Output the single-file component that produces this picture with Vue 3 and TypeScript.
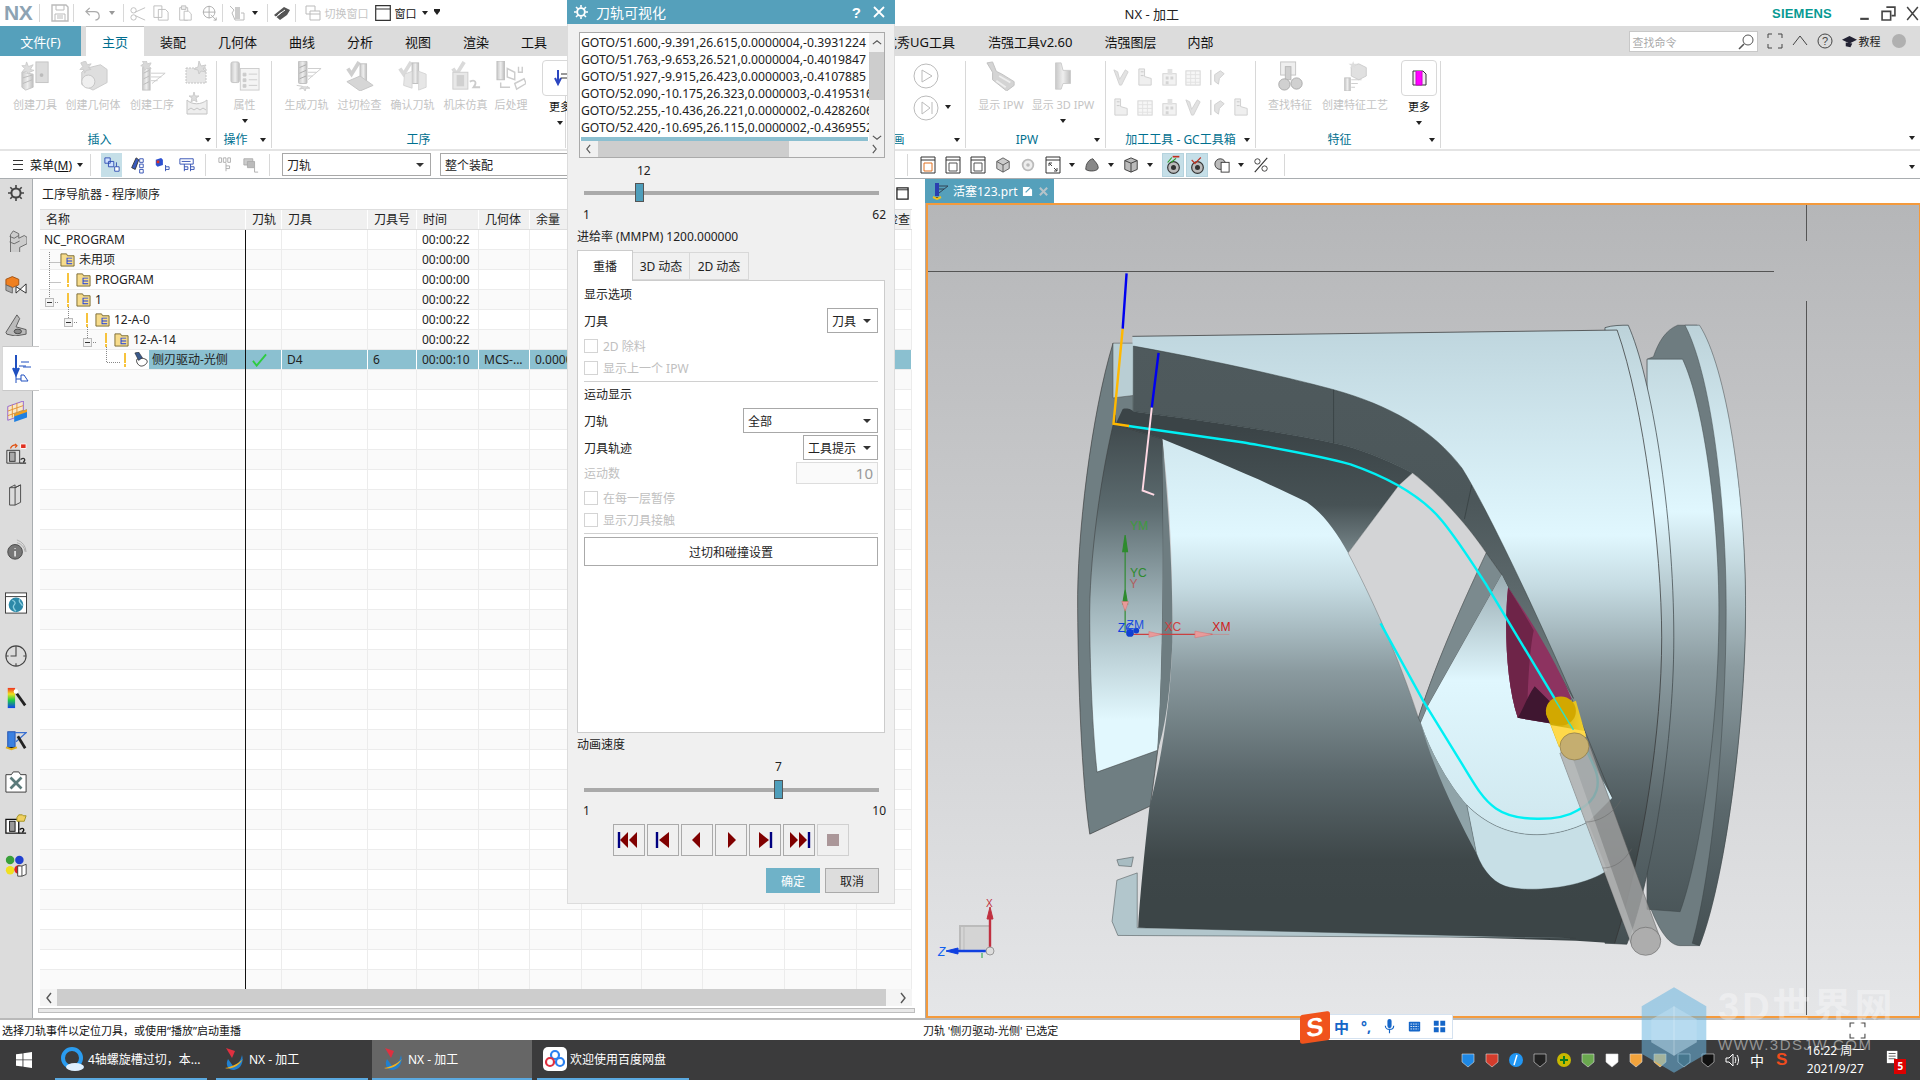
<script setup lang="ts">
interface RibbonItem { icon: string; label: string; w: number; arrow?: boolean }
interface RibbonGroup { label: string; w: number; pad: number; items: RibbonItem[]; small?: string[][]; corner?: boolean }

const tabs = ['装配', '几何体', '曲线', '分析', '视图', '渲染', '工具', '', '优秀UG工具', '浩强工具v2.60', '浩强图层', '内部']

const leftGroups: RibbonGroup[] = [
  { label: '插入', w: 217, pad: 6, corner: true, items: [
    { icon: 'i-tool', label: '创建刀具', w: 58 },
    { icon: 'i-geom', label: '创建几何体', w: 58 },
    { icon: 'i-op', label: '创建工序', w: 60 }
  ], small: [['i-dots'], ['i-wave']] },
  { label: '操作', w: 55, pad: 0, corner: true, items: [{ icon: 'i-prop', label: '属性', w: 55, arrow: true }] },
  { label: '工序', w: 294, pad: 8, items: [
    { icon: 'i-gen', label: '生成刀轨', w: 53 },
    { icon: 'i-check', label: '过切检查', w: 53 },
    { icon: 'i-verify', label: '确认刀轨', w: 53 },
    { icon: 'i-machine', label: '机床仿真', w: 53 },
    { icon: 'i-post', label: '后处理', w: 38 }
  ] }
]
const rightGroups: RibbonGroup[] = [
  { label: 'IPW', w: 140, pad: 2, corner: true, items: [
    { icon: 'i-ipw', label: '显示 IPW', w: 66 },
    { icon: 'i-ipw3', label: '显示 3D IPW', w: 58, arrow: true }
  ] },
  { label: '加工工具 - GC工具箱', w: 150, pad: 6, corner: true, items: [], small: [
    ['i-s1', 'i-s2', 'i-s3', 'i-s4', 'i-s5'],
    ['i-s2', 'i-s4', 'i-s3', 'i-s1', 'i-s5', 'i-s2']
  ] },
  { label: '特征', w: 185, pad: 4, corner: true, items: [
    { icon: 'i-find', label: '查找特征', w: 60 },
    { icon: 'i-feat', label: '创建特征工艺', w: 70 }
  ] }
]

const folder = 'folder'
interface NavRow { name: string; time: string; indent: number; bar?: boolean; icon?: string; check?: boolean; tool?: string; no?: string; geom?: string; stock?: string; sel?: boolean }
const rows: NavRow[] = [
  { name: 'NC_PROGRAM', time: '00:00:22', indent: 4 },
  { name: '未用项', time: '00:00:00', indent: 20, icon: folder },
  { name: 'PROGRAM', time: '00:00:00', indent: 27, bar: true, icon: folder },
  { name: '1', time: '00:00:22', indent: 27, bar: true, icon: folder },
  { name: '12-A-0', time: '00:00:22', indent: 46, bar: true, icon: folder },
  { name: '12-A-14', time: '00:00:22', indent: 65, bar: true, icon: folder },
  { name: '侧刃驱动-光侧', time: '00:00:10', indent: 84, bar: true, icon: 'op', check: true, tool: 'D4', no: '6', geom: 'MCS-...', stock: '0.0000', sel: true }
]
const blanks = Array.from({ length: 31 }, (_, i) => i)
const cols = ['刀轨', '刀具', '刀具号', '时间', '几何体', '余量', '', '', '', '', '检查']

const railIcons = ['r-part', 'r-asm', 'r-bracket', 'r-nav', 'r-grid', 'r-mach', 'r-books', 'r-info', 'r-web', 'r-clock', 'r-color', 'r-wand', 'r-kit', 'r-mach2', 'r-balls']

const list = [
  'GOTO/51.600,-9.391,26.615,0.0000004,-0.3931224',
  'GOTO/51.763,-9.653,26.521,0.0000004,-0.4019847',
  'GOTO/51.927,-9.915,26.423,0.0000003,-0.4107885',
  'GOTO/52.090,-10.175,26.323,0.0000003,-0.4195316',
  'GOTO/52.255,-10.436,26.221,0.0000002,-0.4282606',
  'GOTO/52.420,-10.695,26.115,0.0000002,-0.4369552'
]

const players = [
  { bar: 'M4 6v16', tri: 'M13 6 5 14l8 8zM22 6l-8 8 8 8z' },
  { bar: 'M8 6v16', tri: 'M20 6l-10 8 10 8z' },
  { bar: '', tri: 'M17 6 9 14l8 8z' },
  { bar: '', tri: 'M11 6l8 8-8 8z' },
  { bar: 'M20 6v16', tri: 'M8 6l10 8-10 8z' },
  { bar: 'M24 6v16', tri: 'M5 6l8 8-8 8zM14 6l8 8-8 8z' }
]

const tray = ['#1e88e5', '#d43c2c', '#2196f3', '#222', '#c7b800', '#6aa84f', '#fff', '#f2a33c', '#e8b04a', '#1b2b2a', '#111']
</script>

<template>
  <div class="app">
    <svg class="defs" width="0" height="0" aria-hidden="true">
      <defs>
        <linearGradient id="gm" x1="0" y1="0" x2="1" y2="0"><stop offset="0" stop-color="#c8c8c8" /><stop offset=".5" stop-color="#eee" /><stop offset="1" stop-color="#bdbdbd" /></linearGradient>
        <symbol id="i-tool" viewBox="0 0 32 32"><path d="M2 12l12 2v14l-8 3-4-3z" fill="url(#gm)" stroke="#c4c4c4" /><path d="M3 18l10-3M3 24l10-4" stroke="#bbb" /><rect x="17" y="1" width="13" height="22" fill="#dcdcdc" stroke="#c4c4c4" /><circle cx="23" cy="15" r="2" fill="#bbb" /><path d="M7 1l2 5 5-2-3 5 4 1-5 2-1 2-2-3-5 1 3-4-3-3 4 0z" fill="#ddd" stroke="#ccc" /></symbol>
        <symbol id="i-geom" viewBox="0 0 32 32"><path d="M8 8l16-4 7 5v14l-15 8-12-6V12z" fill="#dedede" stroke="#cacaca" /><circle cx="11" cy="22" r="7" fill="#efefef" stroke="#c4c4c4" /><path d="M8 0l2 4 4-1-3 4 3 2-5 1-2 3-1-4-4 0 3-3-2-4z" fill="#d8d8d8" stroke="#ccc" /></symbol>
        <symbol id="i-op" viewBox="0 0 32 32"><rect x="6" y="7" width="8" height="24" fill="url(#gm)" stroke="#c4c4c4" /><path d="M7 13l6-3M7 19l6-3M7 25l6-3" stroke="#bbb" /><path d="M15 13h15L16 24M15 17h11M15 21h7" fill="none" stroke="#ccc" /><path d="M10 0l1 3 4-1-2 4 2 2-5 0-2 2-1-4-3-1 3-2-1-3z" fill="#d8d8d8" stroke="#ccc" /></symbol>
        <symbol id="i-prop" viewBox="0 0 32 32"><rect x="1" y="1" width="9" height="22" rx="2" fill="url(#gm)" stroke="#c4c4c4" /><rect x="11" y="8" width="20" height="23" fill="#f4f4f4" stroke="#ccc" /><path d="M14 13h3v3h-3zM14 19h3v3h-3zM14 25h3v3h-3zM20 14h9M20 20h9M20 26h9" fill="#ccc" stroke="#ccc" /></symbol>
        <symbol id="i-gen" viewBox="0 0 32 32"><rect x="7" y="0" width="9" height="24" rx="1" fill="url(#gm)" stroke="#bfbfbf" /><path d="M8 7l7-3M8 13l7-3M8 19l7-3" stroke="#aaa" /><path d="M17 8h14L17 20M17 12h9M17 16h5" fill="none" stroke="#ccc" /><path d="M5 26l6 1-3 3 4-1 2 3 1-3 4 0-3-2" fill="#ddd" stroke="#ccc" /></symbol>
        <symbol id="i-check" viewBox="0 0 32 32"><path d="M3 8l4 6 8-13" fill="none" stroke="#cfcfcf" stroke-width="4" /><rect x="16" y="3" width="7" height="18" fill="url(#gm)" stroke="#bfbfbf" /><path d="M2 22l14-6 14 10-14 6z" fill="#d6d6d6" stroke="#c4c4c4" /></symbol>
        <symbol id="i-verify" viewBox="0 0 32 32"><path d="M2 8l4 6 8-13" fill="none" stroke="#dadada" stroke-width="4" /><rect x="15" y="2" width="7" height="22" fill="url(#gm)" stroke="#bfbfbf" /><path d="M7 14l8-3v18l-9-3zM22 11l8 3v14l-8 3z" fill="#e6e6e6" stroke="#d4d4d4" /></symbol>
        <symbol id="i-machine" viewBox="0 0 32 32"><path d="M2 8l4 6 8-13" fill="none" stroke="#dadada" stroke-width="4" /><rect x="2" y="12" width="16" height="18" fill="#e8e8e8" stroke="#ccc" /><rect x="6" y="15" width="8" height="12" fill="#d0d0d0" /><path d="M20 22c6-3 8 1 4 6h7" fill="none" stroke="#ccc" stroke-width="2" /></symbol>
        <symbol id="i-post" viewBox="0 0 32 32"><rect x="1" y="0" width="8" height="20" fill="url(#gm)" stroke="#bfbfbf" /><path d="M12 8l8 4v8l-8-3zM24 6v6h4V6M20 24l10-5 2 5-10 6zM5 23v5h10" fill="none" stroke="#ccc" stroke-width="1.5" /></symbol>
        <symbol id="i-dots" viewBox="0 0 24 24"><rect x="1" y="7" width="20" height="15" fill="#e6e6e6" stroke="#c4c4c4" stroke-dasharray="2 1" /><path d="M14 0l2 5 5-1-3 4 3 3-5-1-2 3-1-4-4-1 4-2z" fill="#ddd" stroke="#ccc" /></symbol>
        <symbol id="i-wave" viewBox="0 0 24 24"><path d="M2 8c5 5 14 5 20 0v14H2z" fill="#eee" stroke="#c4c4c4" /><path d="M3 18l3-2 3 2 3-2 3 2 3-2 3 2" fill="none" stroke="#c4c4c4" /><path d="M9 0l1 4 4 0-3 2 1 4-3-2-3 2 1-4-3-2 4 0z" fill="#ddd" stroke="#ccc" /></symbol>
        <symbol id="i-ipw" viewBox="0 0 32 32"><path d="M1 2l6-1 4 10 6 3 13 8v4l-8 6L7 20 7 12z" fill="#d4d4d4" stroke="#c0c0c0" /><path d="M14 16l12 7M11 21l10 7" stroke="#eee" stroke-width="2" /></symbol>
        <symbol id="i-ipw3" viewBox="0 0 32 32"><path d="M8 2h6l2 8h8v14h-8l-2 6H8z" fill="url(#gm)" stroke="#ccc" /></symbol>
        <symbol id="i-s1" viewBox="0 0 20 20"><path d="M2 2l4 2 2 8 6-10 3 2-7 14h-2L5 10z" fill="#e2e2e2" stroke="#d2d2d2" /></symbol>
        <symbol id="i-s2" viewBox="0 0 20 20"><path d="M3 1h6v8l7 2v7H3z" fill="#efefef" stroke="#d0d0d0" /><path d="M5 4h3M5 8h3" stroke="#c8c8c8" /></symbol>
        <symbol id="i-s3" viewBox="0 0 20 20"><rect x="3" y="6" width="14" height="12" fill="#f2f2f2" stroke="#d4d4d4" /><path d="M6 9h3v3H6zM11 9h3v3h-3zM6 14h3v3H6z" fill="#d4d4d4" /><rect x="8" y="1" width="5" height="6" fill="#e2e2e2" /></symbol>
        <symbol id="i-s4" viewBox="0 0 20 20"><rect x="2" y="3" width="15" height="15" fill="#f6f6f6" stroke="#d4d4d4" /><path d="M2 7h15M2 11h15M2 15h15M7 3v15M12 3v15" stroke="#e2e2e2" /></symbol>
        <symbol id="i-s5" viewBox="0 0 20 20"><path d="M3 2v16" stroke="#bbb" /><path d="M7 7l6-4 4 3-5 5-1 6-4-3z" fill="#e2e2e2" stroke="#d0d0d0" /></symbol>
        <symbol id="i-find" viewBox="0 0 32 32"><rect x="6" y="1" width="16" height="14" fill="#efefef" stroke="#c4c4c4" /><rect x="11" y="6" width="6" height="14" fill="#cfcfcf" stroke="#b8b8b8" /><circle cx="10" cy="25" r="6" fill="#d0d0d0" stroke="#aaa" /><circle cx="23" cy="24" r="6" fill="#d0d0d0" stroke="#aaa" /></symbol>
        <symbol id="i-feat" viewBox="0 0 32 32"><path d="M12 6l8-3 8 4v9l-8 4-8-4z" fill="#e0e0e0" stroke="#ccc" /><rect x="5" y="18" width="6" height="14" fill="url(#gm)" stroke="#c4c4c4" /><path d="M12 20h11M12 24h7M12 28h4" stroke="#ccc" /><path d="M14 0l1 3 4 0-3 2 1 3-3-2-3 2 1-3-3-2 4 0z" fill="#ddd" /></symbol>
        <symbol id="folder" viewBox="0 0 16 16"><path d="M1 2h6l1 2h7v11H1z" fill="#f7dc8c" stroke="#7a6a30" /><path d="M7 6h6v1H8v2h5v1H8v2h5v1H7z" fill="#1a3de0" /></symbol>
        <symbol id="op" viewBox="0 0 16 16"><path d="M4 8c3-2 8-2 11 1 1 3-3 6-6 6-3 0-6-4-5-7z" fill="#fff" stroke="#333" /><path d="M2 1l4-1 4 6-4 3z" fill="#3a5a8c" stroke="#222" stroke-width=".6" /></symbol>
      </defs>
    </svg>

    <header class="titlebar">
      <strong class="nx">NX</strong>
      <span class="sep"></span>
      <svg class="q q-save" viewBox="0 0 18 18"><path d="M1 1h14l2 2v14H1z" fill="none" stroke="#bbb" stroke-width="1.4" /><path d="M5 1v5h8V1M4 17v-7h10v7M6 12h6M6 14h6" fill="none" stroke="#bbb" /></svg>
      <span class="sep"></span>
      <svg class="q q-undo" viewBox="0 0 18 18"><path d="M5 3 1 7l4 4M1 7h9c6 0 7 8 1 9" fill="none" stroke="#aaa" stroke-width="1.3" /></svg>
      <i class="caret grey"></i>
      <span class="sep"></span>
      <svg class="q q-cut" viewBox="0 0 18 18"><circle cx="4" cy="6" r="3" fill="none" stroke="#bbb" /><circle cx="4" cy="14" r="3" fill="none" stroke="#bbb" /><path d="M6 8l11-5M6 12l11 5" stroke="#bbb" /></svg>
      <svg class="q q-copy" viewBox="0 0 18 18"><path d="M1 1h9v13H1zM6 5h8l3 3v9H6z" fill="#fff" stroke="#bbb" /></svg>
      <svg class="q q-paste" viewBox="0 0 18 18"><path d="M3 3h9v14H3z" fill="none" stroke="#bbb" /><path d="M5 1h5v4H5z" fill="#eee" stroke="#bbb" /><path d="M8 7h5l3 3v7H8z" fill="#fff" stroke="#bbb" /></svg>
      <svg class="q q-move" viewBox="0 0 18 18"><circle cx="8" cy="8" r="6.5" fill="none" stroke="#aaa" /><path d="M1 8h14M8 1v14M10 11l6 6M13 17h3v-3" fill="none" stroke="#aaa" /></svg>
      <span class="sep"></span>
      <svg class="q q-tl" viewBox="0 0 18 18"><rect x="7" y="3" width="5" height="12" fill="#ccc" /><path d="M2 2l4 4-2 3 3 7h9V9l-3 0" fill="none" stroke="#bbb" /></svg>
      <i class="caret"></i>
      <span class="sep"></span>
      <svg class="q q-tl2" viewBox="0 0 18 18"><path d="M1 11l10-8 6 3-3 5-7 5z" fill="#555" /><path d="M5 11l7-5M3 13l6-5" stroke="#fff" /></svg>
      <span class="sep"></span>
      <svg class="q q-win1" viewBox="0 0 16 16"><path d="M1 1h9v8H1z" fill="none" stroke="#bbb" /><path d="M5 6h10v9H5z" fill="#fff" stroke="#bbb" /><path d="M5 9h10" stroke="#bbb" /></svg>
      <span class="q-label grey-text">切换窗口</span>
      <svg class="q q-win2" viewBox="0 0 16 16"><path d="M.7.7h14.6v14.6H.7zM.7 4h14.6" fill="none" stroke="#333" stroke-width="1.2" /></svg>
      <span class="q-label win-label">窗口</span>
      <i class="caret"></i>
      <i class="caret barred"></i>
      <span class="app-title">NX - 加工</span>
      <span class="siemens">SIEMENS</span>
      <div class="win-btns">
        <svg viewBox="0 0 14 14"><path d="M3 12h8" stroke="#444" stroke-width="2" /></svg>
        <svg viewBox="0 0 14 14"><path d="M5 1h8v8h-3M1 5h8v8H1z" fill="none" stroke="#444" stroke-width="1.5" /></svg>
        <svg viewBox="0 0 14 14"><path d="M2 1l10 12M12 1 2 13" stroke="#444" stroke-width="1.4" /></svg>
      </div>
    </header>

    <nav class="tabs">
      <span class="tab-file">文件(F)</span>
      <span class="tab-on">主页</span>
      <span v-for="(t, i) in tabs" :key="i" :class="['tab', 'tab-' + i]">{{ t }}</span>
      <div class="search"><span>查找命令</span><svg viewBox="0 0 16 16"><circle cx="10" cy="6" r="5" fill="none" stroke="#555" /><path d="M6 10l-5 5" stroke="#555" stroke-width="1.6" /></svg></div>
      <svg class="t-ic" viewBox="0 0 16 16"><path d="M1 5V1h4M11 1h4v4M15 11v4h-4M5 15H1v-4" fill="none" stroke="#444" /></svg>
      <svg class="t-ic" viewBox="0 0 16 16"><path d="M1 12 8 3l7 9" fill="none" stroke="#444" /></svg>
      <svg class="t-ic" viewBox="0 0 16 16"><circle cx="8" cy="8" r="7" fill="none" stroke="#444" /><text x="8" y="12" text-anchor="middle" font-size="11" fill="#444" font-family="Liberation Sans">?</text></svg>
      <svg class="t-cap" viewBox="0 0 16 16"><path d="M0 6l8-4 8 4-8 4z" fill="#223" /><path d="M4 9v4l5 1 2-4" fill="#223" /></svg>
      <span class="tut">教程</span>
      <span class="avatar"></span>
    </nav>

    <section class="ribbon">
      <div v-for="g in leftGroups" :key="g.label" class="group" :style="{ width: g.w + 'px' }">
        <div class="g-body" :style="{ paddingLeft: g.pad + 'px' }">
          <div v-for="it in g.items" :key="it.label" class="r-item" :style="{ width: it.w + 'px' }">
            <svg class="r-icon"><use :href="'#' + it.icon" /></svg>
            <span class="r-label">{{ it.label }}</span>
            <i v-if="it.arrow" class="caret r-caret"></i>
          </div>
          <div v-if="g.small" class="r-smalls">
            <svg v-for="s in g.small" :key="s[0]" class="r-small"><use :href="'#' + s[0]" /></svg>
          </div>
          <div v-if="g.label === '工序'" class="more-wrap">
            <div class="more-box"><svg viewBox="0 0 20 20"><path d="M8 2v12M5 10l3 6 3-6" stroke="#2b46c0" stroke-width="2" fill="none" /><path d="M11 6h9M11 10h7" stroke="#333" /></svg></div>
            <span class="r-label dark">更多</span><i class="caret r-caret"></i>
          </div>
        </div>
        <div :class="['g-foot', { shift: g.corner }]"><span>{{ g.label }}</span><i v-if="g.corner" class="caret corner"></i></div>
      </div>
      <div class="group filler"></div>
      <div class="group anim">
        <div class="anim-grid">
          <svg class="circ" viewBox="0 0 26 26"><circle cx="13" cy="13" r="12" fill="none" stroke="#bbb" /><path d="M9 7l10 6-10 6z" fill="none" stroke="#bbb" /></svg>
          <svg class="circ" viewBox="0 0 26 26"><circle cx="13" cy="13" r="12" fill="none" stroke="#bbb" /><path d="M9 7l8 6-8 6zM19 7v12" fill="none" stroke="#bbb" /></svg>
          <i class="caret"></i>
        </div>
        <div class="g-foot"><span>动画</span><i class="caret corner"></i></div>
      </div>
      <div v-for="g in rightGroups" :key="g.label" class="group" :style="{ width: g.w + 'px' }">
        <div class="g-body" :style="{ paddingLeft: g.pad + 'px' }">
          <div v-for="it in g.items" :key="it.label" class="r-item" :style="{ width: it.w + 'px' }">
            <svg class="r-icon"><use :href="'#' + it.icon" /></svg>
            <span class="r-label">{{ it.label }}</span>
            <i v-if="it.arrow" class="caret r-caret"></i>
          </div>
          <div v-if="g.small" class="gc-grid">
            <div v-for="(r, ri) in g.small" :key="ri" class="gc-row">
              <svg v-for="(s, si) in r" :key="si" class="gc-ic"><use :href="'#' + s" /></svg>
            </div>
          </div>
          <div v-if="g.label === '特征'" class="more-wrap feat-more">
            <div class="more-box"><svg viewBox="0 0 20 20"><path d="M4 3h10l3 3v11H4z" fill="#eee" stroke="#333" /><path d="M7 3v14h6V3" fill="#f0f" stroke="#c0c" /></svg></div>
            <span class="r-label dark">更多</span><i class="caret r-caret"></i>
          </div>
        </div>
        <div :class="['g-foot', { shift: g.corner && !g.small }]"><span>{{ g.label }}</span><i v-if="g.corner" class="caret corner"></i></div>
      </div>
      <i class="caret ribbon-end"></i>
    </section>

    <section class="toolbar">
      <span class="burger"></span>
      <span class="menu-t">菜单(<u>M</u>)</span>
      <i class="caret"></i>
      <span class="tsep"></span>
      <span class="tb on"><svg viewBox="0 0 18 18"><path d="M1 1h6v6H1zM5 5h6v6H5z" fill="#cfe0ff" stroke="#2a48b0" /><path d="M12 11h5v5h-5zM14 6v5" fill="#fff" stroke="#2a48b0" /></svg></span>
      <span class="tb"><svg viewBox="0 0 18 18"><path d="M3 12l5-11 3 2-4 11z" fill="#3a5cc0" stroke="#333" /><path d="M12 2h4v4h-4zM12 8h4v4h-4zM12 14h4v4h-4z" fill="#fff" stroke="#2a48b0" /></svg></span>
      <span class="tb"><svg viewBox="0 0 18 18"><path d="M2 3l6-2 2 2v6l-6 2-2-2z" fill="#2c50d0" /><path d="M3 4h3v3H3z" fill="#e03020" /><path d="M13 9v7M13 11h4v3h-4" fill="none" stroke="#2a48b0" /></svg></span>
      <span class="tb"><svg viewBox="0 0 18 18"><path d="M1 2h15M1 2v6h15V2M3 5h10" fill="none" stroke="#2a48b0" /><path d="M6 8v8M6 11h4v3H6M13 8v8M13 11h4v3h-4" fill="none" stroke="#2a48b0" /></svg></span>
      <span class="tsep gap"></span>
      <span class="tb dim"><svg viewBox="0 0 18 18"><path d="M1 1h3v5H1zM6 1h3v5H6zM11 1h3v5h-3zM9 7v9M9 10h4v3H9" fill="none" stroke="#aaa" /></svg></span>
      <span class="tb dim"><svg viewBox="0 0 18 18"><path d="M1 2h10v7H1z" fill="#ccc" stroke="#aaa" /><path d="M5 5h8v7H5z" fill="#bbb" stroke="#aaa" /><path d="M13 12v5h4" fill="none" stroke="#aaa" /></svg></span>
      <span class="tsep last"></span>
      <div class="select tb-sel1"><span>刀轨</span><i class="caret"></i></div>
      <div class="select tb-sel2"><span>整个装配</span></div>
      <span class="tsep view-sep"></span>
      <span class="v-ic" v-for="n in 3" :key="n"><svg viewBox="0 0 16 18"><path d="M1 1h14v16H1zM1 4h14" fill="#fff" stroke="#333" /><path d="M4 7h8v8H4z" fill="none" :stroke="n === 1 ? '#e07020' : '#555'" /></svg></span>
      <span class="v-ic"><svg viewBox="0 0 18 18"><path d="M2 5l7-4 7 4v8l-7 4-7-4z" fill="#ccc" stroke="#555" /><path d="M2 5l7 4 7-4M9 9v8" fill="none" stroke="#555" /></svg></span>
      <span class="v-ic"><svg viewBox="0 0 18 18"><circle cx="9" cy="9" r="6" fill="#eee" stroke="#bbb" stroke-width="2" /><circle cx="9" cy="9" r="2" fill="#bbb" /></svg></span>
      <span class="v-ic"><svg viewBox="0 0 16 18"><path d="M1 1h14v16H1zM1 4h14" fill="#fff" stroke="#333" /><path d="M4 7l3 3M4 7v3M4 7h3M12 15l-3-3M12 15v-3M12 15H9" fill="none" stroke="#444" /></svg></span>
      <i class="caret"></i>
      <span class="v-ic gap7"><svg viewBox="0 0 18 18"><path d="M2 14c0-6 3-11 8-12 2 3 6 6 6 10 0 4-10 5-14 2z" fill="#888" stroke="#444" /></svg></span>
      <i class="caret"></i>
      <span class="v-ic gap7"><svg viewBox="0 0 18 18"><path d="M2 4l7-3 7 3v10l-7 3-7-3z" fill="#bbb" stroke="#333" /><path d="M2 4l7 3 7-3M9 7v10" fill="none" stroke="#333" /></svg></span>
      <i class="caret"></i>
      <span class="v-on first"><svg viewBox="0 0 18 22"><circle cx="9" cy="14" r="7" fill="#bbb" stroke="#333" stroke-width="1.4" /><circle cx="9" cy="14" r="3" fill="#333" /><path d="M2 8l5-6M6 8l6-5" stroke="#2ca02c" stroke-width="1.4" /><path d="M8 1h8" stroke="#c03020" stroke-width="2" /></svg></span>
      <span class="v-on"><svg viewBox="0 0 18 22"><circle cx="9" cy="14" r="7" fill="#bbb" stroke="#333" stroke-width="1.4" /><circle cx="9" cy="14" r="3" fill="#333" /><path d="M2 5l4 4 7-7" fill="none" stroke="#c03020" stroke-width="1.4" /></svg></span>
      <span class="v-ic gap3"><svg viewBox="0 0 18 18"><circle cx="7" cy="8" r="6" fill="#bbb" stroke="#333" /><rect x="8" y="6" width="9" height="11" fill="#fff" stroke="#333" /></svg></span>
      <i class="caret"></i>
      <span class="v-ic gap7"><svg viewBox="0 0 18 18"><path d="M2 17 16 1" stroke="#333" stroke-width="1.3" /><circle cx="5" cy="5" r="3" fill="none" stroke="#333" /><circle cx="13" cy="13" r="3" fill="none" stroke="#333" /></svg></span>
      <span class="tsep view-end"></span>
      <i class="caret toolbar-end"></i>
    </section>

    <main class="work">
      <aside class="rail">
        <div class="rail-gear"><svg viewBox="0 0 16 16"><circle cx="8" cy="8" r="4.6" fill="none" stroke="#444" stroke-width="2" /><path d="M8 0v3M8 13v3M0 8h3M13 8h3M2.3 2.3l2 2M11.7 11.7l2 2M2.3 13.7l2-2M11.7 4.3l2-2" stroke="#444" stroke-width="1.6" /></svg></div>
        <div v-for="r in railIcons" :key="r" :class="['rail-it', r]">
          <svg v-if="r === 'r-part'" viewBox="0 0 24 24"><path d="M9 1l6 3v5l6-3 3 2v7l-8 4v6l-6 2-4-3V5z" fill="#ccc" stroke="#666" /><path d="M5 13l5 2 6-3M5 7l5 2 5-3" fill="none" stroke="#666" /></svg>
          <svg v-else-if="r === 'r-asm'" viewBox="0 0 24 24"><path d="M1 8l7-3 7 3v6l-7 3-7-3z" fill="#f08020" stroke="#a05010" /><path d="M1 14l7 3v6l-7-3z" fill="#aaa" stroke="#666" /><path d="M12 16l11 7V13L12 23z" fill="#fff" stroke="#222" /></svg>
          <svg v-else-if="r === 'r-bracket'" viewBox="0 0 24 24"><path d="M1 20 13 1l3 4-4 9 11 3v5l-12 2-9-2z" fill="#bbb" stroke="#555" /><ellipse cx="14" cy="19" rx="4" ry="2.5" fill="#888" stroke="#444" /></svg>
          <svg v-else-if="r === 'r-nav'" viewBox="0 0 24 30"><path d="M7 1v20M4 14l3 7 3-7" fill="#3370e0" stroke="#2050c0" stroke-width="2" /><path d="M12 8h8M10 12h7M22 13H14" stroke="#2050c0" /><path d="M7 21v8M7 25h5M12 21v6h7l-4-6z" fill="none" stroke="#2050c0" /></svg>
          <svg v-else-if="r === 'r-grid'" viewBox="0 0 24 24"><path d="M3 6 20 0v15L3 21z" fill="#f8e8c8" stroke="#9060d0" /><path d="M3 11l17-6M3 16l17-6M8 4v14M13 2v14" stroke="#e09030" /><path d="M10 14l14-5v9l-14 5z" fill="#2080e0" /><path d="M10 14l14-5v3l-14 5z" fill="#f0a020" /></svg>
          <svg v-else-if="r === 'r-mach'" viewBox="0 0 24 24"><path d="M2 8h14v14H2z" fill="#ddd" stroke="#333" /><rect x="5" y="10" width="6" height="10" fill="#aaa" stroke="#333" /><path d="M16 22h7M17 18c4-3 6 0 3 3" fill="none" stroke="#333" stroke-width="1.4" /><path d="M6 6c1-3 3-4 6-4l-1-1 2 2-2 2" fill="none" stroke="#e05010" stroke-width="1.4" /><path d="M17 1h6v5h-6z" fill="#e03020" stroke="#fff" /></svg>
          <svg v-else-if="r === 'r-books'" viewBox="0 0 24 24"><path d="M5 4v19h6V4zM11 4l6-3v19l-6 3M17 1l-6 3M5 4l6-3" fill="none" stroke="#444" /><path d="M11 1v3" stroke="#444" /></svg>
          <svg v-else-if="r === 'r-info'" viewBox="0 0 24 24"><circle cx="11" cy="14" r="8" fill="#777" stroke="#444" /><path d="M11 10v1M11 13v6" stroke="#ddd" stroke-width="2" /><path d="M13 4a12 12 0 0 1 9 10M13 1a15 15 0 0 1 10 13" fill="none" stroke="#aaa" /></svg>
          <svg v-else-if="r === 'r-web'" viewBox="0 0 24 24"><rect x=".5" y="1" width="23" height="22" fill="#fff" stroke="#333" /><path d="M1 5h22" stroke="#333" /><circle cx="12" cy="14" r="8" fill="#2c89a8" /><path d="M8 9c3 1 4 3 2 5s0 5 2 7M16 8c-2 3 2 4 3 7" fill="none" stroke="#8ecfe0" stroke-width="1.4" /></svg>
          <svg v-else-if="r === 'r-clock'" viewBox="0 0 24 24"><circle cx="12" cy="12" r="11" fill="none" stroke="#444" stroke-width="1.2" /><path d="M12 1v3M12 20v3M1 12h3M20 12h3M12 4v8H6" fill="none" stroke="#444" stroke-width="1.2" /></svg>
          <svg v-else-if="r === 'r-color'" viewBox="0 0 24 24"><defs><linearGradient id="rb" x1="0" y1="0" x2="0" y2="1"><stop offset="0" stop-color="#f03020" /><stop offset=".3" stop-color="#f0e020" /><stop offset=".6" stop-color="#20d040" /><stop offset="1" stop-color="#1040f0" /></linearGradient></defs><rect x="3" y="1" width="8" height="22" fill="url(#rb)" /><path d="M12 6l10 14" stroke="#222" stroke-width="3" /><circle cx="12" cy="5" r="2.5" fill="#fff" /></svg>
          <svg v-else-if="r === 'r-wand'" viewBox="0 0 24 24"><rect x="3" y="3" width="8" height="17" fill="#3a80e0" stroke="#2050b0" /><path d="M11 4h12L12 14" fill="none" stroke="#3a70d0" stroke-width="1.4" /><path d="M14 8l8 13" stroke="#222" stroke-width="3" /><path d="M1 20l6 2 6-2" stroke="#e0b020" stroke-width="2" /></svg>
          <svg v-else-if="r === 'r-kit'" viewBox="0 0 24 24"><path d="M1 4h6l2-3h6l2 3h6v19H1z" fill="#fff" stroke="#333" /><path d="M6 7l12 12M18 7 6 19" stroke="#5a7a7a" stroke-width="3" /></svg>
          <svg v-else-if="r === 'r-mach2'" viewBox="0 0 24 24"><path d="M1 7h14v15H1z" fill="#fff" stroke="#111" stroke-width="1.4" /><rect x="5" y="9" width="6" height="11" fill="#999" stroke="#111" /><path d="M15 22h8M16 18c4-3 6 0 3 3" fill="none" stroke="#111" stroke-width="1.4" /><path d="M13 5l2-3h4l1 1h3l-2 6h-8z" fill="#f0d060" stroke="#a09020" /></svg>
          <svg v-else viewBox="0 0 26 26"><circle cx="6" cy="6" r="5" fill="#3aa03a" /><circle cx="17" cy="6" r="5" fill="#2040d0" /><circle cx="6" cy="18" r="5" fill="#f0e020" /><circle cx="16" cy="17" r="5" fill="#e02020" /><path d="M15 13v12h5V13zM20 13l5-2v12l-5 2" fill="#fff" stroke="#333" /></svg>
        </div>
      </aside>

      <section class="navpanel">
        <div class="nav-head">工序导航器 - 程序顺序<svg class="maxi" viewBox="0 0 14 14"><path d="M1 1h12v12H1z" fill="none" stroke="#222" stroke-width="1.4" /><path d="M1 3h12" stroke="#222" /></svg></div>
        <div class="table">
          <div class="thead">
            <span class="th c-name">名称</span>
            <span v-for="(c, i) in cols" :key="i" :class="['th', { 'th-end': c === '检查' }]">{{ c }}</span>
          </div>
          <div v-for="(r, i) in rows" :key="r.name" :class="['tr', { alt: i % 2 === 1, sel: r.sel }]">
            <div class="td c-name" :style="{ paddingLeft: r.indent + 'px' }">
              <i v-if="r.bar" class="warn"></i>
              <svg v-if="r.icon" class="n-ic"><use :href="'#' + r.icon" /></svg>
              <span class="n-text">{{ r.name }}</span>
            </div>
            <div class="td"><svg v-if="r.check" class="tick" viewBox="0 0 16 14"><path d="M1 8l4 5L15 1" fill="none" stroke="#2ecc40" stroke-width="2" /></svg></div>
            <div class="td">{{ r.tool }}</div>
            <div class="td">{{ r.no }}</div>
            <div class="td">{{ r.time }}</div>
            <div class="td">{{ r.geom }}</div>
            <div class="td">{{ r.stock }}</div>
            <div class="td"></div><div class="td"></div><div class="td"></div><div class="td"></div><div class="td"></div>
          </div>
          <div v-for="b in blanks" :key="b" :class="['tr', { alt: b % 2 === 0 }]">
            <div class="td c-name"></div>
            <div v-for="n in 11" :key="n" class="td"></div>
          </div>
          <svg class="tree" width="120" height="160" viewBox="0 0 120 160">
            <path d="M9.5 42v47M9.5 52.5h11M9.5 72.5h11M13 92.5h5M28.5 97v11M32 112.5h6M47.5 117v11M51 132.5h6M66.5 137v15.5h14" fill="none" stroke="#888" stroke-dasharray="1 1" />
            <g v-for="m in [[5,88],[24,108],[43,128]]" :key="m[0]"><rect :x="m[0] + .5" :y="m[1] + .5" width="8" height="8" fill="#f4f4f4" stroke="#bbb" /><path :d="`M${m[0] + 2} ${m[1] + 4.5}h5`" stroke="#333" /></g>
          </svg>
        </div>
        <div class="hscroll">
          <svg viewBox="0 0 8 12"><path d="M6 1 2 6l4 5" fill="none" stroke="#555" stroke-width="1.4" /></svg>
          <span class="hthumb"></span>
          <svg viewBox="0 0 8 12"><path d="M2 1l4 5-4 5" fill="none" stroke="#555" stroke-width="1.4" /></svg>
        </div>
        <div class="split"></div>
      </section>

      <section class="viewport-col">
        <div class="doc-bar">
          <div class="doc-tab">
            <svg class="doc-ic" viewBox="0 0 18 18"><rect x="4" y="1" width="4" height="13" fill="#2a3fb0" /><path d="M8 4h9L8 11M8 7h5" fill="none" stroke="#345" /><path d="M2 15l4 2 4-2" stroke="#f0c020" stroke-width="2" /></svg>
            <span>活塞123.prt</span>
            <svg class="doc-mini" viewBox="0 0 12 12"><path d="M1 1h7l3 3v7H1z" fill="#fff" /><path d="M4 7l5-5" stroke="#55a0bb" stroke-width="1.4" /></svg>
            <svg class="doc-mini x" viewBox="0 0 12 12"><path d="M2 2l8 8M10 2l-8 8" stroke="#b5c3c9" stroke-width="2.2" /></svg>
          </div>
        </div>
        <div class="viewport">
          <svg class="scene" viewBox="925 202 995 816" width="995" height="816">
            <defs>
              <linearGradient id="body" gradientUnits="userSpaceOnUse" x1="0" y1="225" x2="0" y2="1400">
                <stop offset="0" stop-color="#bfd6de" /><stop offset=".36" stop-color="#e0f7fe" /><stop offset=".45" stop-color="#c5dbe2" /><stop offset=".6" stop-color="#8a9a9f" /><stop offset=".78" stop-color="#5b686c" /><stop offset=".93" stop-color="#3e4749" /><stop offset="1" stop-color="#3c4547" />
              </linearGradient>
              <linearGradient id="rim" gradientUnits="userSpaceOnUse" x1="0" y1="215" x2="0" y2="1495">
                <stop offset="0" stop-color="#bcd2d9" /><stop offset=".3" stop-color="#e0f7fe" /><stop offset=".55" stop-color="#8c9ca1" /><stop offset=".78" stop-color="#5b686c" /><stop offset="1" stop-color="#455053" />
              </linearGradient>
              <linearGradient id="inner" gradientUnits="userSpaceOnUse" x1="0" y1="400" x2="0" y2="1030">
                <stop offset="0" stop-color="#3d4649" /><stop offset=".3" stop-color="#5b6a6e" /><stop offset=".62" stop-color="#9fb3b9" /><stop offset="1" stop-color="#e2f8fe" />
              </linearGradient>
              <linearGradient id="wall" gradientUnits="userSpaceOnUse" x1="0" y1="260" x2="0" y2="900">
                <stop offset="0" stop-color="#4f5a5d" /><stop offset=".5" stop-color="#4c575a" /><stop offset="1" stop-color="#687578" />
              </linearGradient>
              <linearGradient id="floor" gradientUnits="userSpaceOnUse" x1="0" y1="430" x2="0" y2="690">
                <stop offset="0" stop-color="#3b4447" /><stop offset=".6" stop-color="#475255" /><stop offset="1" stop-color="#7a898d" />
              </linearGradient>
              <linearGradient id="pocket" gradientUnits="userSpaceOnUse" x1="0" y1="740" x2="0" y2="1260">
                <stop offset="0" stop-color="#9db0b6" /><stop offset=".4" stop-color="#e0f7fe" /><stop offset="1" stop-color="#cfe7ee" />
              </linearGradient>
              <linearGradient id="gold" x1="0" y1="0" x2="1" y2="0"><stop offset="0" stop-color="#c9a400" /><stop offset="1" stop-color="#f0d030" /></linearGradient>
            </defs>
            <g transform="translate(1050 220) scale(.4847)">
              <path d="M1295 215C1270 225 1255 250 1245 280L1232 285V1420L1240 1420C1260 1470 1280 1495 1300 1495L1340 1495C1390 1370 1435 1050 1435 795C1435 560 1390 300 1335 215Z" fill="#6e7c80" stroke="#3c4547" stroke-width="1" />
              <path d="M1310 215L1340 215C1395 300 1435 560 1435 795C1435 1050 1390 1370 1340 1495L1325 1490C1365 1350 1395 1050 1395 800C1395 580 1365 320 1310 215Z" fill="url(#rim)" stroke="#3c4547" stroke-width="1" />
              <path d="M1232 285L1305 285C1350 380 1380 620 1380 805C1380 1030 1345 1300 1300 1425L1232 1420Z" fill="url(#rim)" stroke="#3c4547" stroke-width="1" />
              <path d="M1145 220C1160 215 1180 215 1193 215C1240 320 1287 600 1287 860C1287 1100 1235 1380 1190 1492L1145 1490Z" fill="url(#rim)" stroke="#3c4547" stroke-width="1.5" />
              <path d="M130 252C85 400 55 650 57 800C58 950 65 1150 82 1265L207 1207L252 870L232 450L172 393V360Z" fill="#6f7e82" stroke="#333" stroke-width="1.2" />
              <path d="M135 400C105 520 80 700 82 830C83 960 90 1070 97 1137L222 1092C232 950 236 700 232 500V450L135 420Z" fill="url(#inner)" stroke="#333" stroke-width="1" />
              <path d="M130 252H172V360L130 365Z" fill="#b9ced4" stroke="#444" stroke-width="1" />
              <path d="M170 238L1170 225C1225 380 1262 680 1262 860C1262 1050 1225 1300 1165 1490L1085 1485L182 1458C185 1400 195 1300 205 1210C225 1130 250 1000 252 870C255 700 245 560 232 450L172 393Z" fill="url(#body)" />
              <path d="M232 450C245 600 255 750 252 870C250 950 240 1040 222 1092C232 950 236 700 232 500Z" fill="#6e7d81" />
              <path d="M170 238L1170 225C1225 380 1262 680 1262 860C1262 1050 1225 1300 1165 1490" fill="none" stroke="#333" stroke-width="1.5" />
              <path d="M172 258C350 290 500 325 585 348C700 380 790 430 850 510C900 590 1000 800 1080 985L945 755L932 730L900 685C860 625 800 560 748 520C690 490 640 470 585 458C450 430 300 410 172 393Z" fill="url(#wall)" stroke="#2f3739" stroke-width="1" />
              <path d="M585 348V458M870 545L855 615" stroke="#2f3739" stroke-width="1.2" fill="none" />
              <path d="M150 388C160 385 170 390 172 393C300 410 450 430 585 458C640 470 690 490 748 520L720 545L615 685C590 640 565 605 530 580C450 540 330 490 232 450L135 420Z" fill="url(#floor)" />
              <path d="M615 685L720 545L748 520C800 560 860 625 900 685C860 770 800 900 760 1025C720 900 660 770 615 685Z" fill="#d3d4d6" stroke="#555" stroke-width=".8" />
              <path d="M900 685L932 730L780 1000L765 1035L760 1025C800 900 860 770 900 685Z" fill="#7b8a8e" stroke="#333" stroke-width=".8" />
              <path d="M932 730L945 756C937 830 940 950 965 1025L1040 1038L1075 1060L1110 1100L1160 1190L1110 1240C1040 1275 940 1285 860 1205C830 1170 790 1110 765 1035L780 1000Z" fill="url(#pocket)" />
              <path d="M765 1035C790 1110 830 1170 860 1205L880 1305C840 1230 790 1130 765 1035Z" fill="#8fa3a8" />
              <path d="M860 1205C940 1285 1040 1275 1110 1240L1150 1340C1100 1375 1000 1385 950 1375C920 1370 895 1345 880 1305Z" fill="#c7dfe6" stroke="#3a4345" stroke-width=".8" />
              <path d="M945 756C937 830 940 950 965 1025L1040 1038L1076 985C1040 900 990 820 945 756Z" fill="#8d3360" />
              <path d="M945 756C937 830 940 950 965 1025L985 1020C985 960 990 880 998 845C985 820 960 780 945 756Z" fill="#6e2448" />
              <path d="M965 1025C975 1010 985 980 1000 960L1050 1010L1040 1038Z" fill="#3f1630" />
              <path d="M1076 985L1160 1190" stroke="#333" stroke-width="1" />
              <path d="M128 1445L138 1360L180 1345V1458L1085 1480L940 1478L140 1474Z" fill="#b2c6cc" stroke="#3a4345" stroke-width="1" />
              <path d="M138 1318L172 1312L168 1332L142 1330Z" fill="#a8bcc2" stroke="#3a4345" stroke-width="1" />
              <path d="M162 423L400 457C500 475 560 485 620 502C700 530 770 570 810 620C850 670 880 720 900 750L1080 1050" fill="none" stroke="#00f0f4" stroke-width="5" stroke-linejoin="round" />
              <path d="M682 830L770 990L850 1120C880 1170 895 1195 920 1212C960 1240 1050 1240 1090 1215C1130 1195 1140 1160 1120 1120L1090 1055" fill="none" stroke="#00f0f4" stroke-width="5" />
              <path d="M150 222 131 418l32 5" fill="none" stroke="#ffb800" stroke-width="5" />
              <path d="M158 108l-8 114M224 272l-14 113" fill="none" stroke="#0000f0" stroke-width="5" />
              <path d="M210 385 191 556l24 9" fill="none" stroke="#ffd9e4" stroke-width="4" />
              <path d="M1052 1098L1112 1078L1260 1483L1200 1493Z" fill="#9c9d9d" fill-opacity=".85" stroke="#555" stroke-width="1" />
              <path d="M1052 1098L1072 1090L1212 1490L1200 1493Z" fill="#c6c7c7" fill-opacity=".5" />
              <path d="M1105 1240C1130 1240 1160 1225 1178 1195M1140 1335C1165 1335 1185 1320 1200 1295" fill="none" stroke="#666" />
              <ellipse cx="1229" cy="1486" rx="31" ry="29" fill="#adadad" stroke="#555" />
              <path d="M1023 1015L1085 990L1105 1060L1050 1085Z" fill="url(#gold)" />
              <ellipse cx="1054" cy="1011" rx="31" ry="30" fill="#d2a800" />
              <path d="M1033 1040L1103 1052L1106 1064L1051 1086Z" fill="#ffd94a" />
              <ellipse cx="1082" cy="1084" rx="30" ry="28" fill="#c5ae70" stroke="#6f6030" />
              <path d="M1040 985L1080 1050" stroke="#33e0c0" stroke-width="3" fill="none" />
              <path d="M155 850V648M155 648l-5 34h10zM155 760l-5 30h10z" fill="#2e8b2e" stroke="#2e8b2e" stroke-width="2.4" />
              <path d="M165 853h170" stroke="#c94040" stroke-width="2.4" />
              <path d="M335 853l-36-7v14zM230 853l-26-6v12zM155 805l-7-20h14zM335 853h35" fill="#e89a9a" stroke="#d87070" />
              <circle cx="165" cy="850" r="8" fill="#1040d0" /><circle cx="178" cy="845" r="6" fill="#1040d0" />
              <g font-family="Liberation Sans" font-size="25">
                <text x="165" y="637" fill="#3d9a3d">YM</text>
                <text x="165" y="735" fill="#2e8b2e">YC</text>
                <text x="164" y="757" fill="#b06060">Y</text>
                <text x="140" y="847" fill="#1040e0">ZC</text>
                <text x="158" y="842" fill="#2050e0">ZM</text>
                <text x="236" y="845" fill="#d04040">XC</text>
                <text x="335" y="845" fill="#d02020">XM</text>
              </g>
            </g>
            <path d="M928 270.5h846M1806.5 204v36M1806.5 300v714" stroke="#555" fill="none" />
            <g>
              <path d="M960 925h30v25h-30z" fill="#d4d4d4" stroke="#bbb" stroke-width="2" />
              <path d="M964 925v25" stroke="#bbb" />
              <path d="M990 950v-35" stroke="#c03040" stroke-width="2.4" />
              <path d="M990 906l-3 12h6z" fill="#c03040" stroke="#c03040" />
              <path d="M990 950h-38" stroke="#1040e0" stroke-width="2.4" />
              <path d="M946 950l12-3v6z" fill="#1040e0" stroke="#1040e0" />
              <circle cx="990" cy="950" r="4" fill="#ddd" stroke="#999" />
              <path d="M982 952v5" stroke="#20a040" />
              <text x="986" y="906" font-size="10" fill="#c03040" font-family="Liberation Sans">X</text>
              <text x="938" y="955" font-size="12" fill="#1060f0" font-family="Liberation Sans" font-style="italic">Z</text>
            </g>
          </svg>
        </div>
      </section>
    </main>

    <footer class="status">
      <span>选择刀轨事件以定位刀具，或使用“播放”启动重播</span>
      <span class="status-r">刀轨 '侧刃驱动-光侧' 已选定</span>
      <svg class="st-full" viewBox="0 0 16 16"><path d="M1 5V1h4M11 1h4v4M15 11v4h-4M5 15H1v-4" fill="none" stroke="#444" /></svg>
    </footer>

    <footer class="taskbar">
      <svg class="winlogo" viewBox="0 0 16 16"><path d="M0 2.3 6.5 1.4v6H0zM7.4 1.3 16 0v7.4H7.4zM0 8.3h6.5v6.2L0 13.7zM7.4 8.3H16V16l-8.6-1.2z" fill="#fff" /></svg>
      <div class="task t1"><svg viewBox="0 0 24 24"><circle cx="11" cy="11" r="9" fill="none" stroke="#2a9cf0" stroke-width="4" /><ellipse cx="14" cy="20" rx="9" ry="4" fill="#dff0ff" /></svg><span>4轴螺旋槽过切，本...</span></div>
      <div class="task t2"><svg viewBox="0 0 24 24"><path d="M4 1l9 3-3 7z" fill="#e03040" /><path d="M6 12c-3 6 0 11 6 11 7-1 10-8 8-15-1 5-4 10-9 11z" fill="#2080d0" /><path d="M3 21c6 2 14-2 18-9-3 3-10 8-18 9z" fill="#f0b020" /></svg><span>NX - 加工</span></div>
      <div class="task t3"><svg viewBox="0 0 24 24"><path d="M4 1l9 3-3 7z" fill="#e03040" /><path d="M6 12c-3 6 0 11 6 11 7-1 10-8 8-15-1 5-4 10-9 11z" fill="#2080d0" /><path d="M3 21c6 2 14-2 18-9-3 3-10 8-18 9z" fill="#f0b020" /></svg><span>NX - 加工</span></div>
      <div class="task t4"><svg viewBox="0 0 24 24"><rect width="24" height="24" rx="5" fill="#fff" /><circle cx="12" cy="8" r="4" fill="none" stroke="#2a80f0" stroke-width="2.2" /><circle cx="7" cy="15" r="4" fill="none" stroke="#e03040" stroke-width="2.2" /><circle cx="17" cy="15" r="4" fill="none" stroke="#2a80f0" stroke-width="2.2" /></svg><span>欢迎使用百度网盘</span></div>
      <div class="tray">
        <svg v-for="(c, i) in tray" :key="i" class="tray-ic" viewBox="0 0 16 16"><circle v-if="i === 2 || i === 4" cx="8" cy="8" r="7" :fill="c" /><path v-else d="M2 2h12v8l-6 5-6-5z" :fill="c" stroke="#ddd" stroke-width=".6" /><path v-if="i === 2" d="M9 3 6 13" stroke="#fff" stroke-width="1.5" /><path v-if="i === 4" d="M8 4v8M4 8h8" stroke="#0a7a20" stroke-width="2" /></svg>
        <svg class="tray-ic" viewBox="0 0 16 16"><path d="M2 6h3l4-4v12l-4-4H2z" fill="none" stroke="#fff" /><path d="M11 5c1 2 1 4 0 6M13 3c2 3 2 7 0 10" fill="none" stroke="#fff" /></svg>
        <span class="tray-t">中</span>
        <span class="tray-s">S</span>
        <div class="clock"><span>16:22 周一</span><span>2021/9/27</span></div>
        <div class="notice"><svg viewBox="0 0 16 16"><path d="M1 1h12v14H1z" fill="#fff" /><path d="M3 4h8M3 7h8M3 10h8" stroke="#555" /></svg><b>5</b></div>
      </div>
    </footer>

    <section class="dialog">
      <header class="d-title">
        <svg viewBox="0 0 16 16"><circle cx="8" cy="8" r="4.4" fill="none" stroke="#fff" stroke-width="2.2" /><path d="M8 0v3M8 13v3M0 8h3M13 8h3M2.3 2.3l2 2M11.7 11.7l2 2M2.3 13.7l2-2M11.7 4.3l2-2" stroke="#fff" stroke-width="1.8" /></svg>
        <span>刀轨可视化</span>
        <b class="d-help">?</b>
        <svg class="d-x" viewBox="0 0 12 12"><path d="M1 1l10 10M11 1 1 11" stroke="#fff" stroke-width="1.8" /></svg>
      </header>
      <div class="d-body">
        <div class="listbox">
          <div class="lb-top">
            <div class="lb-lines">
              <div v-for="l in list" :key="l" class="lb-line">{{ l }}</div>
              <div class="lb-sel"></div>
            </div>
            <div class="vscroll">
              <svg viewBox="0 0 12 8"><path d="M1 6l5-4 5 4" fill="none" stroke="#555" stroke-width="1.4" /></svg>
              <span class="vthumb"></span>
              <svg viewBox="0 0 12 8"><path d="M1 2l5 4 5-4" fill="none" stroke="#555" stroke-width="1.4" /></svg>
            </div>
          </div>
          <div class="lb-h">
            <svg viewBox="0 0 8 12"><path d="M6 1 2 6l4 5" fill="none" stroke="#555" stroke-width="1.4" /></svg>
            <span class="lb-thumb"></span>
            <svg class="lb-r" viewBox="0 0 8 12"><path d="M2 1l4 5-4 5" fill="none" stroke="#555" stroke-width="1.4" /></svg>
          </div>
        </div>

        <div class="sl-val sv12">12</div>
        <div class="slider s1"><span class="thumb th12"></span></div>
        <div class="sl-range"><span>1</span><span>62</span></div>
        <div class="feed">进给率 (MMPM) 1200.000000</div>

        <div class="d-tabs">
          <span class="d-tab on">重播</span>
          <span class="d-tab">3D 动态</span>
          <span class="d-tab">2D 动态</span>
        </div>
        <div class="panel">
          <div class="p-h">显示选项</div>
          <div class="p-row r1"><span>刀具</span><div class="select s-tool"><span>刀具</span><i class="caret"></i></div></div>
          <label class="chk chk1"><i></i>2D 除料</label>
          <label class="chk"><i></i>显示上一个 IPW</label>
          <hr />
          <div class="p-h">运动显示</div>
          <div class="p-row r2"><span>刀轨</span><div class="select s-all"><span>全部</span><i class="caret"></i></div></div>
          <div class="p-row r3"><span>刀具轨迹</span><div class="select s-tip"><span>工具提示</span><i class="caret"></i></div></div>
          <div class="p-row r4 dis"><span>运动数</span><div class="num">10</div></div>
          <label class="chk chk3"><i></i>在每一层暂停</label>
          <label class="chk"><i></i>显示刀具接触</label>
          <hr class="h2" />
          <button class="wide">过切和碰撞设置</button>
        </div>

        <div class="speed-h">动画速度</div>
        <div class="sl-val sv7">7</div>
        <div class="slider s2"><span class="thumb th7"></span></div>
        <div class="sl-range"><span>1</span><span>10</span></div>

        <div class="players">
          <button v-for="(p, i) in players" :key="i" class="pl">
            <svg viewBox="0 0 28 28"><path :d="p.tri" fill="#800000" /><path v-if="p.bar" :d="p.bar" stroke="#000080" stroke-width="2.4" /></svg>
          </button>
          <button class="pl off"><i></i></button>
        </div>
        <div class="d-actions">
          <button class="ok">确定</button>
          <button class="cancel">取消</button>
        </div>
      </div>
    </section>

    <div class="ime">
      <span class="ime-s">S</span>
      <b>中</b>
      <span class="ime-dot">°,</span>
      <svg viewBox="0 0 12 18"><rect x="3.5" y="0" width="5" height="11" rx="2.5" fill="#1566c8" /><path d="M1 8c0 6 10 6 10 0M6 13v4" fill="none" stroke="#1566c8" stroke-width="1.4" /></svg>
      <svg viewBox="0 0 16 16"><rect x="1" y="2" width="14" height="12" rx="1" fill="#1566c8" /><path d="M3 5h10M3 8h10M3 11h10" stroke="#fff" stroke-dasharray="2 1" /></svg>
      <svg viewBox="0 0 16 16"><path d="M1 1h6v6H1zM9 1h6v6H9zM1 9h6v6H1zM9 9h6v6H9z" fill="#1566c8" /></svg>
    </div>

    <div class="mark">
      <svg viewBox="0 0 80 90" width="76" height="90"><path d="M40 0l34 20v50L40 90 6 70V20z" fill="#6cb6e0" fill-opacity=".55" /><path d="M40 20l24 14v24L40 72 16 58V34z" fill="#bfe0f2" fill-opacity=".5" /><path d="M40 20v52" stroke="#fff" stroke-opacity=".3" /></svg>
      <div class="mark-t"><b>3D世界网</b><span>WWW.3DSJW.COM</span></div>
    </div>
  </div>
</template>

<style>
html, body { margin: 0; background: #fff; }
</style>

<style scoped>
.app { position: relative; width: 1920px; height: 1080px; overflow: hidden; display: flex; flex-direction: column; background: #fff; color: #222; font: 12px "Noto Sans", "Noto Sans CJK SC", sans-serif; }
.defs { position: absolute; }
.caret { display: inline-block; width: 0; height: 0; border: 3.5px solid transparent; border-top: 4px solid #222; border-bottom: 0; flex: none; }
.caret.grey { border-top-color: #999; }
.select { box-sizing: border-box; display: flex; align-items: center; justify-content: space-between; padding: 0 6px 0 4px; border: 1px solid #a8a8a8; background: #fff; font-size: 12px; height: 25px; }
.select .caret { border-width: 4px 4px 0; border-top-color: #333; border-left-color: transparent; border-right-color: transparent; }

.titlebar { height: 26px; flex: none; display: flex; align-items: center; }
.nx { margin-left: 4px; width: 33px; font: bold 21px "Liberation Sans", sans-serif; color: #8da3b3; letter-spacing: -.3px; }
.sep { width: 1px; height: 18px; background: #d8d8d8; margin: 0 5px 0 4px; }
.q { width: 16px; height: 16px; flex: none; }
.q-save { width: 18px; height: 18px; margin: 0 0 0 6px; }
.q-undo { width: 17px; height: 17px; margin: 0 7px 0 6px; }
.q-undo + .caret { margin-right: 4px; }
.q-cut { margin-left: 1px; }
.q-copy { margin: 0 8px 0 7px; }
.q-paste { margin-right: 9px; }
.q-tl { width: 18px; height: 18px; margin: 0 6px 0 0; }
.q-tl + .caret { margin-right: 5px; }
.q-tl2 { width: 18px; height: 18px; margin-left: 0; }
.q-win1 { margin: 0 4px 0 4px; }
.q-win2 { margin: 0 4px 0 6px; }
.q-label { font-size: 11px; white-space: nowrap; }
.grey-text { color: #c4c4c4; }
.win-label { margin-right: 5px; color: #111; }
.win-label + .caret { margin-right: 6px; }
.barred { border-top-width: 4px; box-shadow: 0 -2px 0 0 #222; }
.app-title { margin-left: 685px; font-size: 13px; color: #222; white-space: nowrap; }
.siemens { margin-left: 593px; font: bold 13px "Liberation Sans", sans-serif; color: #079a93; letter-spacing: .2px; }
.win-btns { margin-left: 25px; display: flex; gap: 9px; }
.win-btns svg { width: 15px; height: 15px; }

.tabs { height: 30px; flex: none; background: #dcdcdc; display: flex; align-items: stretch; font-size: 13px; }
.tabs > span { display: flex; align-items: center; white-space: nowrap; }
.tab-file { width: 81px; justify-content: center; background: #55a0bb; color: #fff; }
.tab-on { width: 58px; margin-left: 5px; justify-content: center; background: #fff; color: #006e8f; border-top: 1px solid #bbb; box-sizing: border-box; }
.tab { margin-left: 32px; color: #111; font-size: 13px; }
.tab-0 { margin-left: 16px; }
.tab-7 { width: 304px; margin-left: 0; }
.tab-8 { margin-left: 33px; }
.tab-9 { margin-left: 33px; }
.tab-10 { margin-left: 32px; }
.tab-11 { margin-left: 31px; }
.search { margin-left: 415px; margin-top: 5px; box-sizing: border-box; width: 129px; height: 21px; background: #fff; border: 1px solid #c8c8c8; display: flex; align-items: center; justify-content: space-between; padding: 0 3px; color: #aaa; font-size: 11px; }
.search svg { width: 16px; height: 16px; }
.t-ic { width: 16px; height: 16px; margin: 7px 0 0 9px; }
.t-cap { width: 15px; height: 15px; margin: 8px 0 0 9px; }
.tabs > .tut { font-size: 11px; margin-left: 2px; color: #222; }
.tabs > .avatar { width: 14px; height: 14px; border-radius: 50%; background: #b0b0b0; margin: 8px 0 0 11px; }

.ribbon { height: 93px; flex: none; display: flex; border-bottom: 2px solid #e4e4e4; position: relative; box-sizing: content-box; }
.group { flex: none; box-sizing: border-box; margin: 5px 0 1px; border-right: 1px solid #d8d8d8; display: flex; flex-direction: column; position: relative; }
.g-body { display: flex; flex: 1; padding-top: 0; }
.filler { width: 254px; }
.anim { width: 146px; }
.anim-grid { flex: 1; display: grid; grid-template-columns: 26px 8px; justify-content: end; align-content: start; gap: 4px 6px; padding: 2px 12px 0 0; }
.anim-grid .circ { width: 26px; height: 26px; grid-column: 1; }
.anim-grid .caret { grid-column: 2; grid-row: 2; align-self: center; }
.anim-grid .circ:nth-child(2) { margin-top: 2px; }
.r-item { display: flex; flex-direction: column; align-items: center; flex: none; position: relative; }
.r-icon { width: 30px; height: 30px; margin-top: 0; display: block; }
.r-label { margin-top: 6px; font-size: 11px; color: #c4c4c4; white-space: nowrap; line-height: 16px; }
.r-label.dark { color: #111; margin-top: 3px; }
.r-caret { margin-top: 6px; }
.r-smalls { display: flex; flex-direction: column; gap: 7px; padding-left: 3px; }
.r-small { width: 24px; height: 24px; }
.more-wrap { display: flex; flex-direction: column; align-items: center; margin-left: 12px; width: 38px; }
.feat-more { margin-left: 10px; }
.more-box { box-sizing: border-box; width: 36px; height: 36px; margin-top: -1px; border: 1px solid #d8d8d8; border-radius: 4px; background: #fff; display: flex; align-items: center; justify-content: center; }
.more-box svg { width: 20px; height: 20px; }
.g-foot { height: 16px; line-height: 16px; text-align: center; color: #00708f; font-size: 12px; }
.g-foot.shift { padding-right: 17px; }
.corner { position: absolute; right: 5px; bottom: 6px; }
.ribbon-end { position: absolute; right: 5px; bottom: 9px; }
.gc-grid { display: flex; flex-direction: column; gap: 11px; padding-top: 7px; }
.gc-row { display: flex; gap: 5px; }
.gc-ic { width: 19px; height: 19px; }

.toolbar { height: 27px; flex: none; box-sizing: content-box; display: flex; align-items: center; border-bottom: 1px solid #a9adb0; position: relative; }
.burger { width: 10px; height: 8px; margin-left: 13px; border-top: 1px solid #333; border-bottom: 1px solid #333; position: relative; }
.burger::after { content: ""; position: absolute; left: 0; right: 0; top: 3px; border-top: 1px solid #333; }
.menu-t { margin: 0 5px 0 7px; font-size: 12px; color: #111; }
.tsep { width: 1px; height: 22px; background: #d8d8d8; margin: 0 10px 0 7px; }
.tsep.gap { margin-left: 4px; margin-right: 9px; }
.tsep.last { margin: 0 12px 0 4px; }
.tb { width: 21px; height: 24px; display: flex; align-items: center; justify-content: center; margin-right: 4px; }
.tb svg { width: 16px; height: 18px; }
.tb.on { background: #c5dfe8; }
.tb-sel1 { width: 149px; height: 23px; flex: none; }
.tb-sel2 { width: 140px; height: 23px; margin-left: 9px; flex: none; }
.view-sep { margin: 0 12px 0 327px; }
.v-ic { width: 16px; height: 18px; margin-right: 9px; flex: none; }
.v-ic svg { width: 100%; height: 100%; display: block; }
.v-ic + .caret { margin-left: -1px; }
.gap7 { margin-left: 9px; }
.gap3 { margin-left: 6px; }
.v-on { width: 22px; height: 24px; background: #c5dfe8; border: 1px solid #b5d3de; box-sizing: border-box; margin-left: 2px; display: flex; align-items: center; justify-content: center; }
.v-on.first { margin-left: 9px; }
.v-on svg { width: 15px; height: 20px; }
.view-end { margin-left: 6px; }
.toolbar-end { position: absolute; right: 5px; top: 14px; }

.work { flex: 1; min-height: 0; display: flex; }
.rail { width: 33px; box-sizing: border-box; flex: none; background: #dcdcdc; border-right: 1px solid #a9adb0; display: flex; flex-direction: column; align-items: center; position: relative; }
.rail-gear { height: 28px; display: flex; align-items: center; justify-content: center; }
.rail-gear svg { width: 16px; height: 16px; }
.rail-it { display: flex; justify-content: center; align-items: center; width: 100%; flex: none; }
.rail-it svg { width: 22px; height: 22px; }
.r-part { height: 42px; margin-top: 13px; }
.r-asm { height: 42px; }
.r-bracket { height: 42px; }
.r-nav { height: 45px; width: 37px; align-self: flex-start; margin-left: 2px; background: #fff; position: relative; z-index: 1; border-left: 1px solid #d8d8d8; border-top: 1px solid #c8c8c8; border-bottom: 1px solid #c8c8c8; box-sizing: border-box; }
.r-nav svg { height: 30px; width: 24px; }
.r-grid { height: 42px; }
.r-mach { height: 42px; }
.r-books { height: 42px; margin-top: -1px; }
.r-info { height: 42px; margin-top: 13px; }
.r-web { height: 42px; margin-top: 11px; }
.r-clock { height: 42px; margin-top: 11px; }
.r-color { height: 42px; }
.r-wand { height: 42px; }
.r-kit { height: 42px; }
.r-mach2 { height: 42px; }
.r-balls { height: 42px; }

.navpanel { width: 892px; flex: none; box-sizing: border-box; display: flex; flex-direction: column; padding-left: 5px; }
.nav-head { height: 30px; box-sizing: border-box; padding: 6px 0 0 4px; font-size: 12px; color: #222; position: relative; flex: none; }
.maxi { position: absolute; left: 858px; top: 8px; width: 13px; height: 13px; }
.table { position: relative; height: 780px; flex: none; width: 872px; margin-left: 2px; border-top: 1px solid #dedede; overflow: hidden; box-sizing: border-box; }
.table::after { content: ""; position: absolute; left: 205px; top: 20px; bottom: 0; width: 1px; background: #111; }
.thead, .tr { display: grid; grid-template-columns: 206px 36px 86px 49px 62px 51px 52px 60px 61px 82px 72px 55px; }
.thead { height: 20px; background: #f0f0f0; border-bottom: 1px solid #ddd; box-sizing: border-box; }
.th { padding-left: 6px; line-height: 19px; font-size: 12px; border-right: 1px solid #fff; white-space: nowrap; overflow: hidden; color: #222; }
.th-end { padding-left: 29px; }
.tr { height: 20px; background: #fff; }
.tr.alt { background: #fafafa; }
.td { height: 20px; font-size: 12px; line-height: 19px; padding-left: 5px; border-right: 1px solid #ececec; border-bottom: 1px solid #ececec; white-space: nowrap; overflow: hidden; color: #222; display: flex; align-items: center; box-sizing: border-box; }
.td.c-name { padding-left: 0; }
.tr.sel .td:not(.c-name) { background: #8bc0d0; border-right-color: #fff; }
.tr.sel .n-text { background: #8bc0d0; flex: 1; align-self: stretch; padding-left: 3px; margin-left: 1px; }
.warn { width: 2px; height: 14px; background: linear-gradient(#f7c33c 0 10px, #fff 10px 11px, #f7c33c 11px); flex: none; margin-right: 7px; }
.n-ic { width: 15px; height: 15px; flex: none; margin-right: 4px; }
.tr.sel .n-ic { margin-right: 0; }
.tick { width: 15px; height: 14px; margin-left: 1px; }
.tree { position: absolute; left: 0; top: 0; }
.hscroll { height: 17px; width: 872px; margin-left: 2px; flex: none; display: flex; align-items: center; background: #f4f4f4; }
.hscroll svg { width: 8px; height: 12px; margin: 0 5px; flex: none; }
.hthumb { width: 833px; height: 17px; background: #cdcdcd; margin-left: -1px; margin-right: 8px; }
.split { height: 5px; margin-top: 2px; width: 877px; box-sizing: border-box; border: 1px solid #bdbdbd; background: #e8e8e8; }

.viewport-col { flex: 1; min-width: 0; display: flex; flex-direction: column; }
.doc-bar { height: 24px; flex: none; display: flex; background: #fff; }
.doc-tab { width: 129px; background: #55a0bb; color: #fff; display: flex; align-items: center; font-size: 12px; padding-left: 6px; box-sizing: border-box; white-space: nowrap; }
.doc-ic { width: 18px; height: 18px; margin-right: 4px; flex: none; }
.doc-mini { width: 11px; height: 11px; margin-left: 5px; flex: none; }
.viewport { flex: 1; min-height: 0; position: relative; box-sizing: border-box; border-left: 1px solid #a9adb0; background: linear-gradient(#b5b6b8 0, #c6c7c9 35%, #e5e6e8 100%); overflow: hidden; }
.viewport::after { content: ""; position: absolute; inset: 0; border: solid #f49a3c; border-width: 2px 1px 2px 2px; pointer-events: none; }
.scene { position: absolute; left: -1px; top: 0; display: block; }

.status { height: 22px; box-sizing: border-box; flex: none; border-top: 2px solid #b9b9b9; display: flex; align-items: center; font-size: 11px; padding-left: 2px; color: #111; position: relative; background: #fff; }
.status-r { position: absolute; left: 923px; }
.st-full { position: absolute; left: 1849px; width: 17px; height: 17px; }

.taskbar { height: 40px; flex: none; background: #3b3b3c; display: flex; align-items: stretch; color: #fff; font-size: 12px; }
.winlogo { width: 16px; height: 16px; margin: 12px 23px 0 16px; flex: none; }
.task { display: flex; align-items: center; border-bottom: 2px solid #5aa9e0; box-sizing: border-box; flex: none; gap: 3px; white-space: nowrap; padding-left: 6px; }
.task svg { width: 24px; height: 26px; flex: none; }
.t1 { width: 152px; margin-right: 9px; }
.t2 { width: 152px; margin-right: 4px; }
.t3 { width: 160px; margin-right: 5px; background: #666; padding-left: 9px; }
.t4 { width: 152px; }
.tray { margin-left: 771px; display: flex; align-items: center; flex: 1; }
.tray-ic { width: 16px; height: 18px; margin-right: 8px; flex: none; }
.tray-t { margin: 0 12px 0 2px; font-size: 14px; }
.tray-s { color: #f04c1c; font: bold 17px "Liberation Sans", sans-serif; margin-right: 13px; }
.clock { display: flex; flex-direction: column; align-items: center; gap: 4px; font-size: 12px; line-height: 14px; width: 70px; }
.notice { position: relative; margin-left: 16px; width: 16px; height: 24px; }
.notice svg { width: 14px; height: 18px; }
.notice b { position: absolute; right: -4px; bottom: -2px; background: #d00; width: 12px; height: 15px; font-size: 10px; text-align: center; line-height: 15px; }

.dialog { position: absolute; left: 567px; top: 0; width: 328px; height: 904px; box-sizing: border-box; background: #f0f0f0; border: 1px solid #dcdcdc; border-top: 0; display: flex; flex-direction: column; font-size: 12px; color: #222; }
.d-title { height: 24px; flex: none; margin: 0 -1px; background: #55a0bb; display: flex; align-items: center; color: #fff; font-size: 14px; }
.d-title > svg:first-child { width: 14px; height: 14px; margin: 0 8px 0 7px; }
.d-help { margin-left: auto; font: bold 15px "Liberation Sans", sans-serif; }
.d-x { width: 12px; height: 12px; margin: 0 10px 0 12px; }
.d-body { flex: 1; display: flex; flex-direction: column; padding: 8px 8px 0 9px; min-height: 0; }
.listbox { width: 306px; height: 126px; margin-left: 2px; box-sizing: border-box; border: 1px solid #aaa; background: #fff; flex: none; display: flex; flex-direction: column; }
.lb-top { height: 108px; display: flex; }
.lb-lines { flex: 1; min-width: 0; overflow: hidden; padding: 1px 0 0 1px; position: relative; }
.lb-line { height: 17px; line-height: 17px; font-size: 12.2px; white-space: nowrap; color: #222; }
.lb-sel { position: absolute; left: 1px; right: 1px; bottom: 0; height: 4px; background: #8bbfd0; }
.vscroll { width: 15px; background: #f0f0f0; flex: none; display: flex; flex-direction: column; align-items: center; justify-content: space-between; padding: 6px 0 0; box-sizing: border-box; }
.vscroll svg { width: 10px; height: 7px; flex: none; }
.vthumb { width: 15px; height: 48px; background: #cdcdcd; margin: 6px 0 auto; }
.lb-h { flex: 1; display: flex; align-items: center; background: #f0f0f0; padding: 0 5px; }
.lb-h svg { width: 7px; height: 10px; flex: none; }
.lb-thumb { width: 191px; height: 100%; background: #cdcdcd; margin-left: 6px; }
.lb-r { margin-left: auto; margin-right: 1px; }
.sl-val { height: 18px; line-height: 18px; flex: none; font-size: 12px; }
.sv12 { padding-left: 60px; margin-top: 4px; }
.sv7 { padding-left: 198px; margin-top: 4px; }
.slider { height: 4px; margin: 0 7px; background: #aaa; position: relative; flex: none; }
.s1 { margin-top: 11px; }
.s2 { margin-top: 12px; }
.thumb { position: absolute; top: -8px; width: 9px; height: 19px; box-sizing: border-box; background: #4e9ebb; border: 1px solid #555; }
.th12 { left: 51px; }
.th7 { left: 190px; }
.sl-range { margin-top: 12px; padding: 0 0 0 6px; display: flex; justify-content: space-between; line-height: 16px; height: 16px; flex: none; color: #222; }
.s2 + .sl-range { margin-top: 11px; }
.feed { margin: 6px 0 0 0; height: 16px; line-height: 16px; flex: none; }
.d-tabs { display: flex; margin-top: 5px; flex: none; height: 30px; position: relative; z-index: 1; }
.d-tab { width: 57px; height: 28px; margin-top: 2px; box-sizing: border-box; display: flex; align-items: center; justify-content: center; background: #f0f0f0; border: 1px solid #d8d8d8; border-left: 0; }
.d-tab.on { width: 56px; height: 31px; margin-top: 0; background: #fff; border: 1px solid #ccc; border-bottom: 0; }
.d-tab:last-child { width: 59px; }
.panel { height: 453px; box-sizing: border-box; flex: none; background: #fff; border: 1px solid #ccc; padding: 5px 6px 0; width: 308px; }
.p-h { height: 18px; line-height: 18px; }
.p-row { display: flex; align-items: center; justify-content: space-between; }
.r1 { height: 25px; margin-top: 4px; }
.r2 { height: 25px; margin-top: 4px; }
.r3 { height: 25px; margin-top: 2px; }
.r4 { height: 22px; margin-top: 2px; }
.s-tool { width: 51px; }
.s-all { width: 135px; }
.s-tip { width: 75px; }
.dis { color: #c0c0c0; }
.num { width: 82px; height: 22px; box-sizing: border-box; border: 1px solid #ddd; background: #fafafa; text-align: right; padding-right: 4px; font-size: 15px; line-height: 20px; color: #999; }
.chk { display: flex; align-items: center; height: 22px; color: #c0c0c0; }
.chk i { width: 12px; height: 12px; border: 1px solid #d4d4d4; margin-right: 5px; background: #fff; flex: none; }
.chk1 { margin-top: 2px; }
.chk3 { margin-top: 3px; }
hr { border: 0; border-top: 1px solid #d0d0d0; margin: 2px 0 4px; }
.h2 { margin: 2px 0 3px; }
.wide { width: 294px; height: 29px; box-sizing: border-box; border: 1px solid #aaa; background: #fff; font: 12px "Noto Sans", "Noto Sans CJK SC", sans-serif; color: #222; display: block; }
.speed-h { margin: 3px 0 0; height: 18px; line-height: 18px; flex: none; }
.players { display: flex; gap: 2px; margin: 5px 0 0 36px; flex: none; }
.pl { width: 32px; height: 32px; box-sizing: border-box; border: 1px solid #aaa; background: #f0f0f0; padding: 0; display: flex; align-items: center; justify-content: center; }
.pl svg { width: 28px; height: 28px; }
.pl.off { border-color: #d0d0d0; }
.pl.off i { width: 12px; height: 12px; background: #ab9799; }
.d-actions { display: flex; justify-content: flex-end; gap: 5px; margin: 12px 7px 0 0; flex: none; }
.d-actions button { width: 54px; height: 25px; box-sizing: border-box; font: 12px "Noto Sans", "Noto Sans CJK SC", sans-serif; padding: 0; }
.ok { background: #6fb2c8; border: 0; color: #fff; }
.cancel { background: #ddd; border: 1px solid #aaa; color: #222; }

.ime { position: absolute; left: 1320px; top: 1014px; width: 133px; height: 25px; box-sizing: border-box; background: #fff; border: 1px solid #d5e2f0; border-left: 0; display: flex; align-items: center; gap: 12px; padding-left: 6px; color: #1566c8; font-size: 13px; }
.ime svg { width: 13px; height: 15px; }
.ime-s { position: absolute; left: -20px; top: -2px; width: 30px; height: 29px; background: #f0531c; color: #fff; font: bold 26px/28px "Liberation Sans", sans-serif; text-align: center; transform: skewY(-8deg); border-radius: 3px; }
.ime b { font-size: 15px; margin-left: 8px; }
.ime-dot { font-weight: bold; font-size: 14px; }

.mark { position: absolute; left: 1636px; top: 985px; display: flex; gap: 6px; pointer-events: none; }
.mark-t { display: flex; flex-direction: column; margin-top: 4px; }
.mark-t b { font: bold 38px/36px "Liberation Sans", "Noto Sans CJK SC", sans-serif; color: rgba(255,255,255,.35); letter-spacing: 3px; white-space: nowrap; }
.mark-t span { margin-top: 11px; font: 15px "Liberation Sans", sans-serif; color: rgba(210,210,210,.6); letter-spacing: 1.5px; }
</style>
